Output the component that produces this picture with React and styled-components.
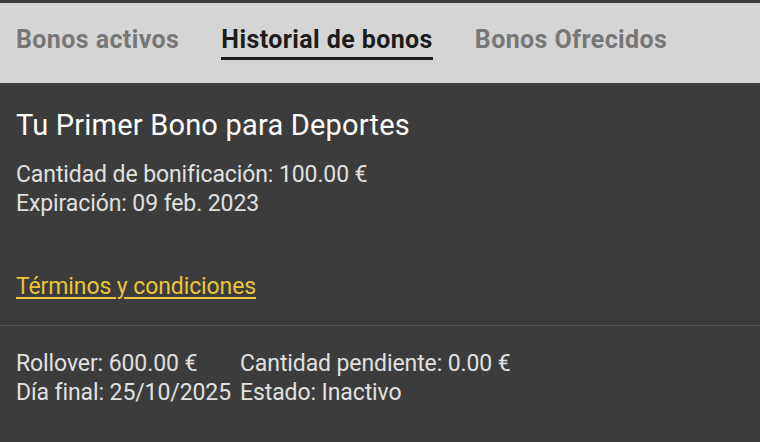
import React from "react";
import styled, { createGlobalStyle } from "styled-components";

const GlobalStyle = createGlobalStyle`
  html, body {
    margin: 0;
    padding: 0;
    background: #3c3c3c;
  }
  body {
    font-family: Roboto, "Liberation Sans", sans-serif;
  }
`;

const Page = styled.div`
  width: 760px;
  height: 442px;
  background: #3c3c3c;
  padding-top: 3px;
  box-sizing: border-box;
  overflow: hidden;
`;

const TabBar = styled.nav`
  display: flex;
  align-items: flex-start;
  gap: 42px;
  height: 80px;
  padding: 0 16px;
  background: #d5d5d5;
  box-sizing: border-box;
`;

const Tab = styled.div`
  padding-top: 22px;
  padding-bottom: 3px;
  font-size: 25px;
  font-weight: 700;
  letter-spacing: 0.4px;
  color: ${({ active }) => (active ? "#1c1c1c" : "#777777")};
  border-bottom: 3px solid ${({ active }) => (active ? "#1c1c1c" : "transparent")};
  white-space: nowrap;
`;

const Section = styled.section`
  padding: ${({ pad }) => pad};
  border-bottom: ${({ divider }) => (divider ? "1px solid #545454" : "none")};
`;

const Title = styled.h2`
  margin: 0 0 18px;
  font-size: 29px;
  font-weight: 400;
  color: #ffffff;
  letter-spacing: 0.2px;
`;

const Line = styled.div`
  font-size: 23px;
  line-height: 29px;
  color: #e0e0e0;
  letter-spacing: -0.1px;
  white-space: nowrap;
`;

const TermsLink = styled.a`
  display: inline-block;
  margin-top: 54px;
  font-size: 23px;
  line-height: 29px;
  color: #e8c53a;
  text-decoration: underline;
  text-decoration-thickness: 2px;
  text-underline-offset: 3px;
  letter-spacing: -0.1px;
  cursor: pointer;
`;

const Grid = styled.div`
  display: grid;
  grid-template-columns: 224px auto;
  justify-content: start;
`;

export default function App() {
  return (
    <>
      <GlobalStyle />
      <Page>
        <TabBar>
          <Tab>Bonos activos</Tab>
          <Tab active>Historial de bonos</Tab>
          <Tab>Bonos Ofrecidos</Tab>
        </TabBar>
        <Section pad="25px 16px 24px" divider>
          <Title>Tu Primer Bono para Deportes</Title>
          <Line>Cantidad de bonificación: 100.00 €</Line>
          <Line>Expiración: 09 feb. 2023</Line>
          <TermsLink>Términos y condiciones</TermsLink>
        </Section>
        <Section pad="23px 16px">
          <Grid>
            <Line>Rollover: 600.00 €</Line>
            <Line>Cantidad pendiente: 0.00 €</Line>
            <Line>Día final: 25/10/2025</Line>
            <Line>Estado: Inactivo</Line>
          </Grid>
        </Section>
      </Page>
    </>
  );
}
